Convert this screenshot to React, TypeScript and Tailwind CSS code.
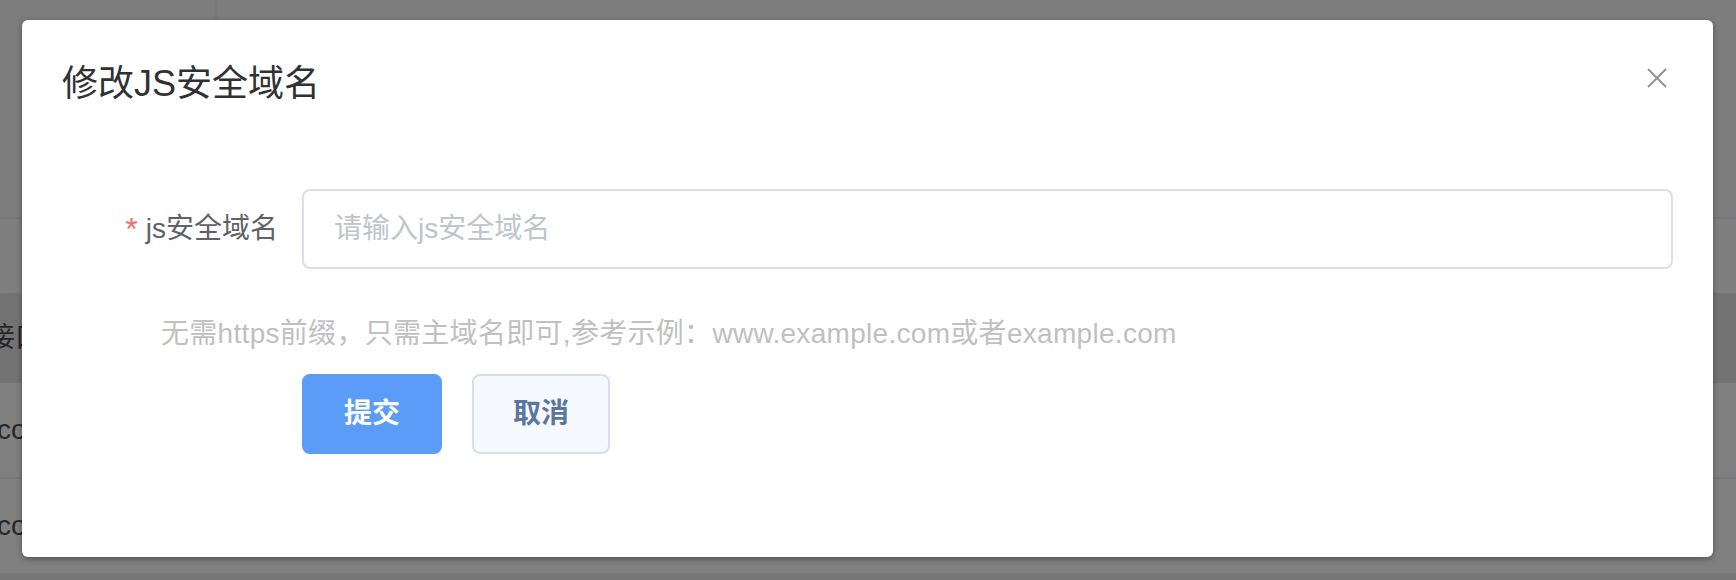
import React from "react";

export default function App() {
  return (
    <div className="relative w-[1736px] h-[580px] overflow-hidden bg-[#808080] font-['Liberation_Sans','Noto_Sans_CJK_SC',sans-serif]">
      {/* underlying page (dimmed by the modal mask) */}
      <div className="flex flex-col h-full">
        <div className="h-[217px] flex shrink-0 bg-[#7d7d7d]">
          <div className="w-[215px]" />
          <div className="w-[2px] bg-[#78787e]" />
          <div className="flex-1" />
        </div>
        <div className="h-[76px] shrink-0 border-t-2 border-[#76767c] bg-[#7f7f7f]" />
        <div className="h-[90px] shrink-0 bg-[#737373] flex items-center overflow-hidden">
          <span className="ml-[-13px] text-[28px] leading-[40px] text-[#262626] whitespace-nowrap">接口地址</span>
        </div>
        <div className="h-[96px] shrink-0 flex items-center border-b-2 border-[#77777d] overflow-hidden">
          <span className="ml-[-3px] text-[28px] leading-[40px] text-[#262626] whitespace-nowrap">com</span>
        </div>
        <div className="h-[94px] shrink-0 flex items-center overflow-hidden">
          <span className="ml-[-3px] text-[28px] leading-[40px] text-[#262626] whitespace-nowrap">com</span>
        </div>
        <div className="flex-1 bg-[#777777]" />
      </div>

      {/* dialog */}
      <div className="absolute left-[22px] top-[20px] w-[1691px] h-[537px] bg-white rounded-[6px] shadow-[0_2px_6px_rgba(0,0,0,0.35)]">
        <div className="relative pt-[40px] px-[40px] pb-[20px]">
          <div className="text-[36px] leading-[48px] text-[#303133]">修改JS安全域名</div>
          <button className="absolute right-[46px] top-[48px] w-[20px] h-[20px]">
            <svg width="20" height="20" viewBox="0 0 20 20" fill="none" stroke="#909399" strokeWidth="2">
              <line x1="1" y1="1" x2="19" y2="19" />
              <line x1="19" y1="1" x2="1" y2="19" />
            </svg>
          </button>
        </div>
        <div className="pt-[61px] px-[40px]">
          <div className="flex h-[80px]">
            <label className="w-[240px] shrink-0 pr-[24px] flex items-center justify-end text-[28px] leading-[80px] text-[#606266]">
              <span className="text-[#f56c6c] text-[32px] mr-[8px]">*</span>
              <span>js安全域名</span>
            </label>
            <div className="flex-1 h-[80px] border-2 border-[#dcdfe6] rounded-[8px] flex items-center pl-[30px]">
              <span className="text-[28px] text-[#c0c4cc]">请输入js安全域名</span>
            </div>
          </div>
          <div className="mt-[45px] ml-[99px] text-[28px] leading-[40px] tracking-[0.3px] text-[#c0c0c0] whitespace-nowrap">
            无需https前缀，只需主域名即可,参考示例：www.example.com或者example.com
          </div>
          <div className="mt-[20px] ml-[240px] flex gap-[30px]">
            <button className="w-[140px] h-[80px] rounded-[8px] bg-[#5b9cf8] text-white text-[28px] font-semibold">
              提交
            </button>
            <button className="w-[138px] h-[80px] rounded-[8px] bg-[#f6f9fe] border-2 border-[#d5e0ef] text-[#5b779e] text-[28px] font-semibold">
              取消
            </button>
          </div>
        </div>
      </div>
    </div>
  );
}
